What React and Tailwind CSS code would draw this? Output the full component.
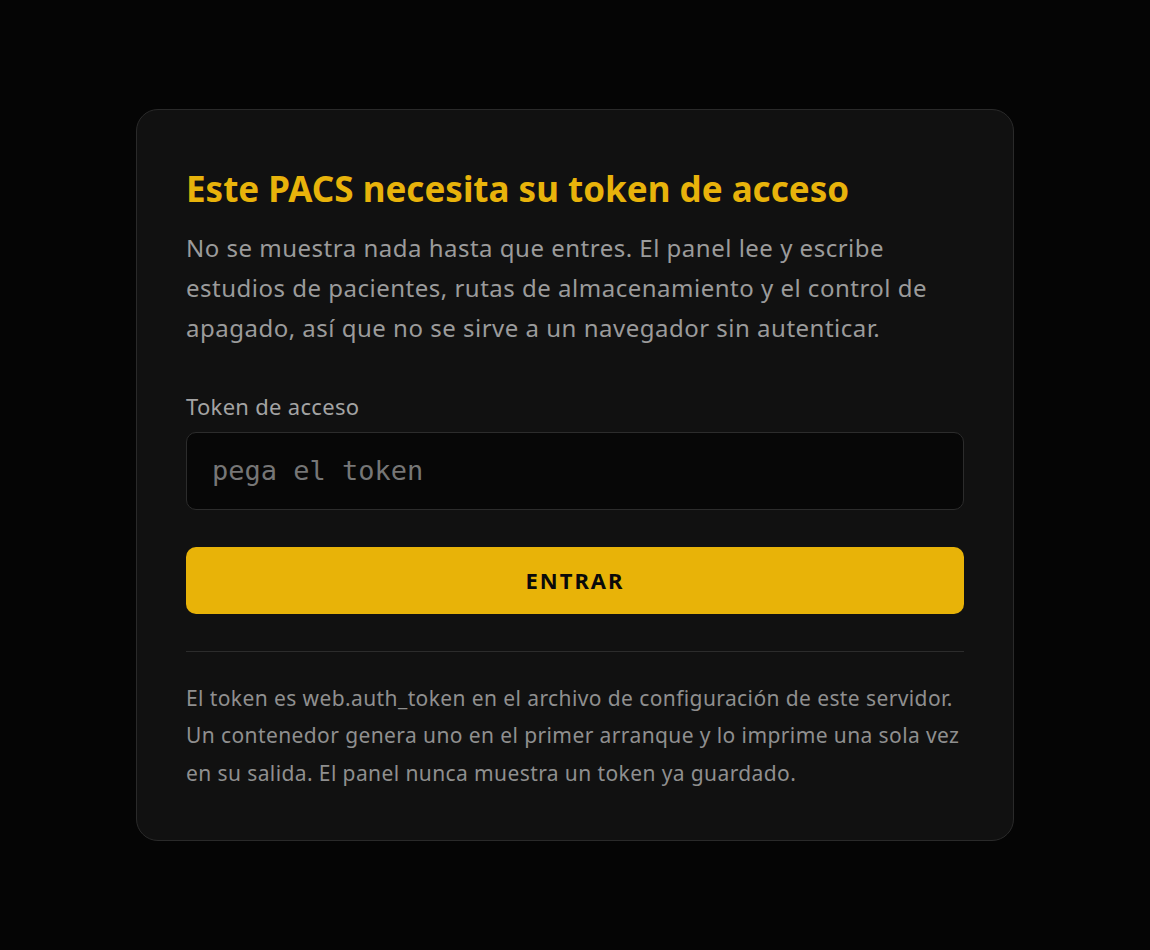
export default function App() {
  return (
    <div
      className="min-h-screen w-full bg-[#050505] flex items-center justify-center"
      style={{ fontFamily: "'Noto Sans', Roboto, sans-serif" }}
    >
      <div className="w-[878px] rounded-[22px] border border-[#2a2a2a] bg-[#111111] px-[49px] pt-[59px] pb-[48px]">
        <h1 className="text-[35px] leading-[40px] font-bold text-[#e8b30b]">
          Este PACS necesita su token de acceso
        </h1>
        <p className="mt-[19px] text-[24px] leading-[40px] tracking-[0.5px] text-[#9b9b9b]">
          No se muestra nada hasta que entres. El panel lee y escribe estudios de pacientes, rutas de almacenamiento y el control de apagado, así que no se sirve a un navegador sin autenticar.
        </p>

        <label className="block mt-[44px] text-[22px] leading-[28px] tracking-[0.3px] text-[#a3a3a3]">
          Token de acceso
        </label>
        <input
          type="text"
          placeholder="pega el token"
          className="mt-[12px] block w-full h-[78px] rounded-[10px] border border-[#2c2c2c] bg-[#070707] px-[25px] text-[27px] text-[#cccccc] placeholder:text-[#767676] outline-none"
          style={{ fontFamily: "'DejaVu Sans Mono', 'Liberation Mono', monospace" }}
        />

        <button className="mt-[37px] w-full h-[67px] rounded-[10px] bg-[#e8b308] text-[22px] font-bold tracking-[0.09em] text-[#0a0a0a]">
          ENTRAR
        </button>

        <div className="mt-[37px] h-px bg-[#2c2c2c]" />

        <p className="mt-[28px] text-[21px] leading-[37.5px] tracking-[0.4px] text-[#8f8f8f]">
          El token es web.auth_token en el archivo de configuración de este servidor. Un contenedor genera uno en el primer arranque y lo imprime una sola vez en su salida. El panel nunca muestra un token ya guardado.
        </p>
      </div>
    </div>
  );
}
